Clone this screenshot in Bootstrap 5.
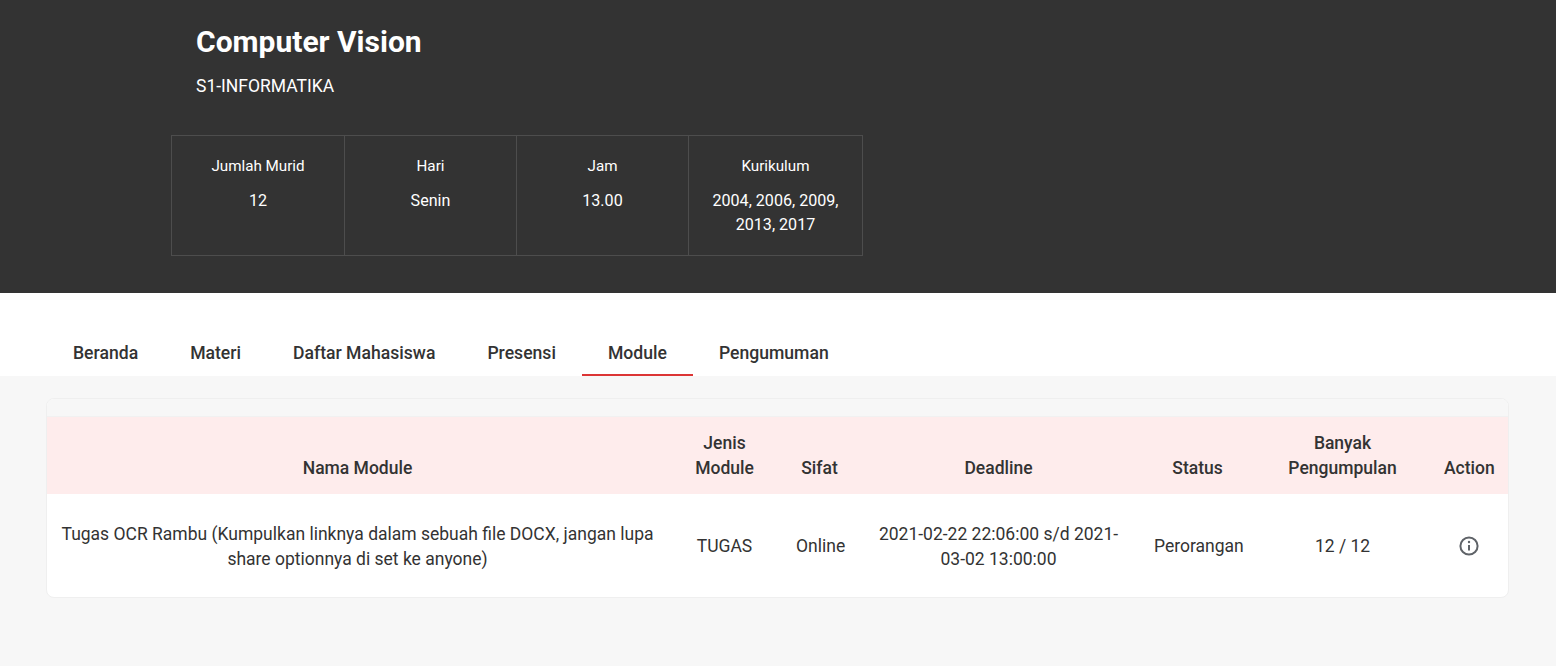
<!DOCTYPE html>
<html lang="id">
<head>
<meta charset="utf-8">
<title>Computer Vision</title>
<link href="https://cdn.jsdelivr.net/npm/bootstrap@5.3.0/dist/css/bootstrap.min.css" rel="stylesheet">
<style>
html,body{height:100%}
body{font-family:Roboto,"Liberation Sans",sans-serif;background:#f7f7f7;color:#333;overflow:hidden}
.hero-band{background:#333;color:#fff;height:293px;padding:22px 0 0 171px}
.hero-title{font-size:30px;font-weight:700;line-height:40px;margin:0 0 0 25px}
.hero-sub{font-size:17.5px;line-height:24px;margin:12px 0 37px 25px;font-weight:400}
.stat-wrap{width:692px;height:121px;border:1px solid #4d4d4d}
.stat-cell{width:172px;padding:20px 12px 0;text-align:center;line-height:24px;border-right:1px solid #4d4d4d}
.stat-cell:first-child{width:173px}
.stat-cell:last-child{border-right:0;width:173px}
.stat-label{font-size:15.2px;font-weight:400;margin-bottom:13px;line-height:20px}
.stat-val{font-size:16.1px}
.tab-band{background:#fff;height:83px;padding:37px 0 0 47px}
.tab-item{display:block;color:#333;font-size:17.6px;font-weight:500;line-height:24px;padding:11px 26px 9px;height:46px;text-decoration:none;border-bottom:2px solid transparent}
.tab-item.on{border-bottom-color:#dc3535}
.panel-wrap{padding:22px 47px 0 46px}
.mod-card{border:1px solid #efefef;border-radius:8px;background:#fff;overflow:hidden}
.mod-top{height:18px;background:#f7f7f7;border-bottom:1px solid #f1f1f1}
.mod-table{table-layout:fixed;width:100%;margin:0;font-size:17.5px;line-height:25px;color:#333}
.mod-table th{background:#feecec;font-weight:500;text-align:center;vertical-align:bottom;padding:14px 15px 13px;border:0;color:#333}
.mod-table td{text-align:center;vertical-align:middle;padding:27px 15px 26px;border:0;color:#333;font-weight:400}
.mod-table td.name-cell{padding:28px 12px 25px}
.mod-table td.date-cell{padding-top:28px;padding-bottom:25px}
.info-ico{display:block;margin:0 auto;width:20px;height:20px;color:#5f6368}
</style>
</head>
<body>
<div class="hero-band">
  <h1 class="hero-title">Computer Vision</h1>
  <p class="hero-sub">S1-INFORMATIKA</p>
  <div class="stat-wrap d-flex">
    <div class="stat-cell"><div class="stat-label">Jumlah Murid</div><div class="stat-val">12</div></div>
    <div class="stat-cell"><div class="stat-label">Hari</div><div class="stat-val">Senin</div></div>
    <div class="stat-cell"><div class="stat-label">Jam</div><div class="stat-val">13.00</div></div>
    <div class="stat-cell"><div class="stat-label">Kurikulum</div><div class="stat-val">2004, 2006, 2009, 2013, 2017</div></div>
  </div>
</div>
<div class="tab-band">
  <nav class="d-flex">
    <a class="tab-item" href="#">Beranda</a>
    <a class="tab-item" href="#">Materi</a>
    <a class="tab-item" href="#">Daftar Mahasiswa</a>
    <a class="tab-item" href="#">Presensi</a>
    <a class="tab-item on" href="#">Module</a>
    <a class="tab-item" href="#">Pengumuman</a>
  </nav>
</div>
<div class="panel-wrap">
  <div class="mod-card">
    <div class="mod-top"></div>
    <table class="table mod-table">
      <colgroup>
        <col style="width:621px"><col style="width:113px"><col style="width:77px"><col style="width:281px"><col style="width:117px"><col style="width:173px"><col>
      </colgroup>
      <thead>
        <tr><th>Nama Module</th><th>Jenis Module</th><th>Sifat</th><th>Deadline</th><th>Status</th><th>Banyak Pengumpulan</th><th>Action</th></tr>
      </thead>
      <tbody>
        <tr>
          <td class="name-cell">Tugas OCR Rambu (Kumpulkan linknya dalam sebuah file DOCX, jangan lupa share optionnya di set ke anyone)</td>
          <td>TUGAS</td>
          <td>Online</td>
          <td class="date-cell">2021-02-22 22:06:00 s/d 2021-03-02 13:00:00</td>
          <td>Perorangan</td>
          <td>12 / 12</td>
          <td><svg class="info-ico" viewBox="0 0 20 20" fill="none" stroke="currentColor" stroke-width="2" aria-label="info"><circle cx="10" cy="10" r="8.6"/><path d="M10 9v5.4" stroke-width="2"/><circle cx="10" cy="6" r="1.2" fill="currentColor" stroke="none"/></svg></td>
        </tr>
      </tbody>
    </table>
  </div>
</div>
<script src="https://cdn.jsdelivr.net/npm/bootstrap@5.3.0/dist/js/bootstrap.bundle.min.js"></script>
</body>
</html>
